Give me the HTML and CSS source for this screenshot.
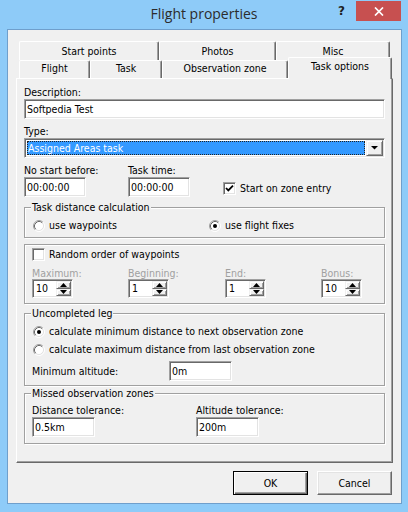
FILE: index.html
```html
<!DOCTYPE html>
<html>
<head>
<meta charset="utf-8">
<title>Flight properties</title>
<link rel="stylesheet" href="styles.css">
</head>
<body>
<div class="window">
  <div class="titlebar">
    <div></div>
    <div class="title">Flight properties</div>
    <div class="caption">
      <span class="help">?</span>
      <span class="close"><svg width="10" height="9" viewBox="0 0 10 9"><path d="M1 0.5 L9 8.5 M9 0.5 L1 8.5" stroke="#fff" stroke-width="1.7" fill="none"/></svg></span>
    </div>
  </div>
  <div class="client">
    <div class="tabs">
      <div class="tabrow back">
        <div class="tab t-start">Start points</div>
        <div class="tab t-photos">Photos</div>
        <div class="tab t-misc">Misc</div>
      </div>
      <div class="tabrow front">
        <div class="tab t-flight">Flight</div>
        <div class="tab t-task">Task</div>
        <div class="tab t-obs">Observation zone</div>
        <div class="tab t-opts active">Task options</div>
      </div>
    </div>
    <div class="panel">
      <div class="lbl">Description:</div>
      <div class="edit">Softpedia Test</div>
      <div class="lbl mt6">Type:</div>
      <div class="combo">
        <div class="combo-sel">Assigned Areas task</div>
        <div class="combo-btn"><svg width="7" height="4" viewBox="0 0 7 4"><polygon points="0,0 7,0 3.5,3.6" fill="#000"/></svg></div>
      </div>
      <div class="times">
        <div class="lbl">No start before:</div>
        <div class="lbl">Task time:</div>
        <div></div>
        <div class="edit time">00:00:00</div>
        <div class="edit time">00:00:00</div>
        <div class="check-row start-entry">
          <span class="cb"><svg width="11" height="11" viewBox="0 0 11 11"><path d="M2 5 L4.3 7.4 L9 2.6" stroke="#000" stroke-width="1.8" fill="none"/></svg></span>
          <span>Start on zone entry</span>
        </div>
      </div>

      <div class="group g1">
        <div class="legend">Task distance calculation</div>
        <div class="radios">
          <div class="check-row">
            <span class="rb"><svg width="12" height="12" viewBox="0 0 12 12"><circle cx="6" cy="6" r="4.5" fill="#fff"/><path d="M2.11 9.89 A5.5 5.5 0 0 1 9.89 2.11" stroke="#a0a0a0" fill="none"/><path d="M9.89 2.11 A5.5 5.5 0 0 1 2.11 9.89" stroke="#fff" fill="none"/><path d="M2.82 9.18 A4.5 4.5 0 0 1 9.18 2.82" stroke="#696969" fill="none"/><path d="M9.18 2.82 A4.5 4.5 0 0 1 2.82 9.18" stroke="#e3e3e3" fill="none"/></svg></span>
            <span>use waypoints</span>
          </div>
          <div class="check-row">
            <span class="rb"><svg width="12" height="12" viewBox="0 0 12 12"><circle cx="6" cy="6" r="4.5" fill="#fff"/><path d="M2.11 9.89 A5.5 5.5 0 0 1 9.89 2.11" stroke="#a0a0a0" fill="none"/><path d="M9.89 2.11 A5.5 5.5 0 0 1 2.11 9.89" stroke="#fff" fill="none"/><path d="M2.82 9.18 A4.5 4.5 0 0 1 9.18 2.82" stroke="#696969" fill="none"/><path d="M9.18 2.82 A4.5 4.5 0 0 1 2.82 9.18" stroke="#e3e3e3" fill="none"/><circle cx="6" cy="6" r="2" fill="#000"/></svg></span>
            <span>use flight fixes</span>
          </div>
        </div>
      </div>

      <div class="group g2">
        <div class="check-row random">
          <span class="cb"></span>
          <span>Random order of waypoints</span>
        </div>
        <div class="spins">
          <div class="lbl dis">Maximum:</div>
          <div class="lbl dis">Beginning:</div>
          <div class="lbl dis">End:</div>
          <div class="lbl dis">Bonus:</div>
          <div class="spin"><span class="spin-val">10</span><span class="spin-btns"><span class="spin-btn"><svg width="7" height="4" viewBox="0 0 7 4"><polygon points="0,4 7,4 3.5,0" fill="#000"/></svg></span><span class="spin-btn"><svg width="7" height="4" viewBox="0 0 7 4"><polygon points="0,0 7,0 3.5,4" fill="#000"/></svg></span></span></div>
          <div class="spin"><span class="spin-val">1</span><span class="spin-btns"><span class="spin-btn"><svg width="7" height="4" viewBox="0 0 7 4"><polygon points="0,4 7,4 3.5,0" fill="#000"/></svg></span><span class="spin-btn"><svg width="7" height="4" viewBox="0 0 7 4"><polygon points="0,0 7,0 3.5,4" fill="#000"/></svg></span></span></div>
          <div class="spin"><span class="spin-val">1</span><span class="spin-btns"><span class="spin-btn"><svg width="7" height="4" viewBox="0 0 7 4"><polygon points="0,4 7,4 3.5,0" fill="#000"/></svg></span><span class="spin-btn"><svg width="7" height="4" viewBox="0 0 7 4"><polygon points="0,0 7,0 3.5,4" fill="#000"/></svg></span></span></div>
          <div class="spin"><span class="spin-val">10</span><span class="spin-btns"><span class="spin-btn"><svg width="7" height="4" viewBox="0 0 7 4"><polygon points="0,4 7,4 3.5,0" fill="#000"/></svg></span><span class="spin-btn"><svg width="7" height="4" viewBox="0 0 7 4"><polygon points="0,0 7,0 3.5,4" fill="#000"/></svg></span></span></div>
        </div>
      </div>

      <div class="group g3">
        <div class="legend">Uncompleted leg</div>
        <div class="check-row r1">
          <span class="rb"><svg width="12" height="12" viewBox="0 0 12 12"><circle cx="6" cy="6" r="4.5" fill="#fff"/><path d="M2.11 9.89 A5.5 5.5 0 0 1 9.89 2.11" stroke="#a0a0a0" fill="none"/><path d="M9.89 2.11 A5.5 5.5 0 0 1 2.11 9.89" stroke="#fff" fill="none"/><path d="M2.82 9.18 A4.5 4.5 0 0 1 9.18 2.82" stroke="#696969" fill="none"/><path d="M9.18 2.82 A4.5 4.5 0 0 1 2.82 9.18" stroke="#e3e3e3" fill="none"/><circle cx="6" cy="6" r="2" fill="#000"/></svg></span>
          <span>calculate minimum distance to next observation zone</span>
        </div>
        <div class="check-row r2">
          <span class="rb"><svg width="12" height="12" viewBox="0 0 12 12"><circle cx="6" cy="6" r="4.5" fill="#fff"/><path d="M2.11 9.89 A5.5 5.5 0 0 1 9.89 2.11" stroke="#a0a0a0" fill="none"/><path d="M9.89 2.11 A5.5 5.5 0 0 1 2.11 9.89" stroke="#fff" fill="none"/><path d="M2.82 9.18 A4.5 4.5 0 0 1 9.18 2.82" stroke="#696969" fill="none"/><path d="M9.18 2.82 A4.5 4.5 0 0 1 2.82 9.18" stroke="#e3e3e3" fill="none"/></svg></span>
          <span>calculate maximum distance from last observation zone</span>
        </div>
        <div class="alt-row">
          <div class="lbl">Minimum altitude:</div>
          <div class="edit short">0m</div>
        </div>
      </div>

      <div class="group g4">
        <div class="legend">Missed observation zones</div>
        <div class="tol">
          <div class="lbl">Distance tolerance:</div>
          <div class="lbl">Altitude tolerance:</div>
          <div class="edit short">0.5km</div>
          <div class="edit short">200m</div>
        </div>
      </div>
    </div>
    <div class="buttons">
      <div class="btn default">OK</div>
      <div class="btn">Cancel</div>
    </div>
  </div>
</div>
</body>
</html>
```
FILE: styles.css
```css
* { box-sizing: border-box; }
html, body { margin: 0; padding: 0; }
body {
  width: 408px; height: 512px; overflow: hidden;
  background: #8ecbf8;
  font-family: "DejaVu Sans Condensed", "DejaVu Sans", sans-serif;
  font-size: 10.5px; color: #000;
}
.window { width: 408px; height: 512px; display: flex; flex-direction: column; background: #8ecbf8; }

.titlebar { height: 29px; flex: none; display: grid; grid-template-columns: 1fr auto 1fr; }
.title { font-family: "Open Sans", sans-serif; font-size: 14px; line-height: 20px; padding-top: 4px; color: #2c2c2c; white-space: nowrap; }
.caption { display: flex; justify-content: flex-end; align-items: flex-start; padding: 1px 7px 0 0; }
.help { font-family: "DejaVu Sans", sans-serif; font-weight: bold; font-size: 12px; line-height: 14px; margin: 3px 11px 0 0; color: #1f1f1f; }
.close { width: 45px; height: 20px; background: #c75050; display: flex; align-items: center; justify-content: center; }

.client {
  margin-left: 7px; width: 395px; height: 475px; flex: none;
  border: 1px solid #6f9fcc; background: #f0f0f0;
  padding: 11px 8px 0 8px; display: flex; flex-direction: column;
}

.tabs { display: flex; flex-direction: column; padding-left: 3px; flex: none; }
.tabrow { display: flex; }
.back { height: 19px; }
.front { height: 18px; }
.tab {
  flex: none; height: 100%;
  display: flex; align-items: center; justify-content: center;
  background: #f0f0f0;
  border-top: 1px solid #fff; border-left: 1px solid #fff; border-right: 1px solid #696969;
  box-shadow: inset -1px 0 #a0a0a0;
  border-radius: 2px 2px 0 0;
  line-height: 13px; white-space: nowrap;
}
.front .tab { padding-bottom: 2px; }
.front .active { height: 22px; margin-top: -3px; position: relative; z-index: 2; padding-bottom: 4px; }
.t-start { width: 140px; }
.t-photos { width: 117px; }
.t-misc { width: 114px; }
.t-flight { width: 71px; }
.t-task { width: 72px; }
.t-obs { width: 126px; }
.t-opts { width: 104px; }

.panel {
  height: 385px; flex: none;
  border: 1px solid; border-color: #fff #696969 #696969 #fff;
  box-shadow: inset -1px -1px #a0a0a0;
  padding: 7px 7px 0 7px;
  display: flex; flex-direction: column;
}
.lbl { line-height: 13px; height: 13px; white-space: nowrap; }
.mt6 { margin-top: 6px; }
.dis { color: #a0a0a0; }

.edit {
  height: 20px; background: #fff;
  border: 1px solid; border-color: #a0a0a0 #fff #fff #a0a0a0;
  box-shadow: inset 1px 1px #696969, inset -1px -1px #e3e3e3;
  padding: 0 2px; line-height: 18px; white-space: nowrap;
}
.time { width: 62px; }
.short { width: 63px; }

.combo {
  height: 20px; display: flex; gap: 1px;
  border: 1px solid; border-color: #a0a0a0 #fff #fff #a0a0a0;
  box-shadow: inset 1px 1px #696969, inset -1px -1px #e3e3e3;
  background: #fff; padding: 1px;
}
.combo-sel {
  flex: 1; margin: 1px 0 1px 1px; background: #3399ff; color: #fff;
  outline: 1px dotted #222; outline-offset: -1px;
  padding-left: 1px; line-height: 14px; white-space: nowrap;
}
.combo-btn {
  width: 17px; flex: none; background: #f0f0f0;
  border: 1px solid; border-color: #f0f0f0 #696969 #696969 #f0f0f0;
  box-shadow: inset 1px 1px #fff, inset -1px -1px #a0a0a0;
  display: flex; align-items: center; justify-content: center;
}

.times { display: grid; grid-template-columns: 104px 95px auto; grid-template-rows: 13px 20px; margin-top: 6px; }
.start-entry { align-self: end; margin-bottom: 2px; }

.check-row { display: flex; align-items: center; gap: 4px; height: 13px; line-height: 13px; white-space: nowrap; }
.cb {
  width: 13px; height: 13px; flex: none; background: #fff;
  border: 1px solid; border-color: #a0a0a0 #fff #fff #a0a0a0;
  box-shadow: inset 1px 1px #696969, inset -1px -1px #e3e3e3;
  display: flex;
}
.rb { width: 12px; height: 12px; flex: none; margin-left: 1px; display: flex; }

.group {
  border: 1px solid #a0a0a0;
  box-shadow: inset 1px 1px #fff, 1px 1px #fff;
  padding: 0 7px;
}
.legend { width: fit-content; margin: -7px 0 0 -1px; padding: 0 1px; background: #f0f0f0; line-height: 13px; height: 13px; white-space: nowrap; }

.g1 { margin-top: 10px; padding-bottom: 5px; }
.radios { display: grid; grid-template-columns: 176px auto; margin-top: 5px; }

.g2 { margin-top: 6px; padding-bottom: 5px; }
.random { margin-top: 3px; }
.spins { display: grid; grid-template-columns: 96px 97px 96px auto; grid-template-rows: 12px 19px; margin-top: 6px; }
.spins .lbl { line-height: 12px; height: 12px; }
.spin {
  width: 41px; height: 19px; display: flex; background: #fff;
  border: 1px solid; border-color: #a0a0a0 #fff #fff #a0a0a0;
  box-shadow: inset 1px 1px #696969, inset -1px -1px #e3e3e3;
  padding: 1px 1px 1px 0;
}
.spin-val { flex: 1; padding-left: 3px; line-height: 15px; }
.spin-btns { width: 15px; flex: none; display: flex; flex-direction: column; }
.spin-btn {
  flex: 1; background: #f0f0f0;
  border: 1px solid; border-color: #f0f0f0 #696969 #696969 #f0f0f0;
  box-shadow: inset 1px 1px #fff, inset -1px -1px #a0a0a0;
  display: flex; align-items: center; justify-content: center;
}

.g3 { margin-top: 9px; padding-bottom: 4px; }
.r1 { margin-top: 5px; }
.r2 { margin-top: 5px; }
.alt-row { display: grid; grid-template-columns: 137px auto; align-items: center; margin-top: 5px; }

.g4 { margin-top: 7px; padding-bottom: 6px; }
.tol { display: grid; grid-template-columns: 164px auto; grid-template-rows: 13px 20px; margin-top: 4px; }

.buttons { display: flex; justify-content: flex-end; gap: 9px; margin-top: 8px; padding-right: 1px; flex: none; }
.btn {
  width: 75px; height: 24px; display: flex; align-items: center; justify-content: center;
  background: #f0f0f0;
  border: 1px solid; border-color: #fff #696969 #696969 #fff;
  box-shadow: inset -1px -1px #a0a0a0, inset 1px 1px #e3e3e3;
}
.btn.default {
  border-color: #000;
  box-shadow: inset 1px 1px #fff, inset -1px -1px #696969, inset -2px -2px #a0a0a0;
}
```
